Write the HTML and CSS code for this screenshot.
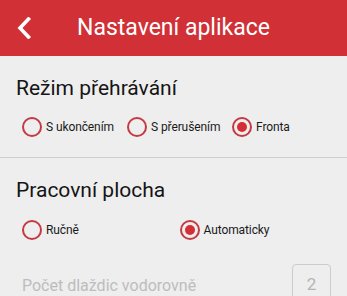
FILE: index.html
```html
<!DOCTYPE html>
<html lang="cs">
<head>
<meta charset="utf-8">
<link rel="stylesheet" href="styles.css">
</head>
<body>
<header class="appbar">
  <span class="back">
    <svg width="16" height="22" viewBox="0 0 16 22"><path d="M12.5 2 L4 11 L12.5 20" fill="none" stroke="#fff" stroke-width="3.6" stroke-linecap="square" stroke-linejoin="miter"/></svg>
  </span>
  <h1 class="title">Nastavení aplikace</h1>
</header>
<section class="section">
  <h2 class="section-title">Režim přehrávání</h2>
  <div class="options three">
    <label class="option"><span class="radio"></span>S ukončením</label>
    <label class="option"><span class="radio"></span>S přerušením</label>
    <label class="option"><span class="radio checked"></span>Fronta</label>
  </div>
</section>
<hr class="divider">
<section class="section">
  <h2 class="section-title">Pracovní plocha</h2>
  <div class="options two">
    <label class="option"><span class="radio"></span>Ručně</label>
    <label class="option"><span class="radio checked"></span>Automaticky</label>
  </div>
  <div class="field">
    <span class="field-label">Počet dlaždic vodorovně</span>
    <span class="field-box">2</span>
  </div>
</section>
</body>
</html>
```
FILE: styles.css
```css
html, body {
  margin: 0;
  padding: 0;
}
body {
  background: #eeeeee;
  font-family: Roboto, "Noto Sans", sans-serif;
  color: #111;
  width: 347px;
  height: 296px;
  overflow: hidden;
}
.appbar {
  height: 56px;
  background: #d13036;
  display: flex;
  align-items: center;
}
.back {
  display: flex;
  margin-left: 16px;
  width: 16px;
}
.title {
  margin: 0 0 0 45px;
  font-size: 23px;
  font-weight: 400;
  color: #fff;
  line-height: 26px;
}
.section {
  padding: 20px 16px 0;
}
.section-title {
  margin: 0;
  font-size: 21px;
  font-weight: 400;
  line-height: 24px;
  color: #151515;
}
.options {
  display: grid;
  margin-top: 17px;
}
.options.three { grid-template-columns: repeat(3, 1fr); }
.options.two { grid-template-columns: repeat(2, 1fr); margin-top: 18px; }
.option {
  display: flex;
  align-items: center;
  height: 20px;
  padding-left: 6px;
  font-size: 12px;
  letter-spacing: -0.1px;
  color: #1a1a1a;
  white-space: nowrap;
}
.radio {
  box-sizing: border-box;
  width: 20px;
  height: 20px;
  border: 2px solid #c43a42;
  border-radius: 50%;
  margin-right: 4px;
  display: flex;
  align-items: center;
  justify-content: center;
  flex: none;
}
.radio.checked::after {
  content: "";
  width: 10px;
  height: 10px;
  border-radius: 50%;
  background: #d32f35;
}
.divider {
  margin: 20px 0 0;
  border: 0;
  height: 1px;
  background: #cfcfcf;
}
.field {
  display: flex;
  justify-content: space-between;
  align-items: flex-start;
  margin-top: 24px;
}
.field-label {
  padding-left: 6px;
  padding-top: 12px;
  font-size: 16px;
  color: #bdbdbd;
}
.field-box {
  box-sizing: border-box;
  width: 39px;
  height: 40px;
  border: 1px solid #cccccc;
  border-radius: 4px;
  display: flex;
  align-items: center;
  justify-content: center;
  font-size: 17px;
  color: #b5b5b5;
}
```
